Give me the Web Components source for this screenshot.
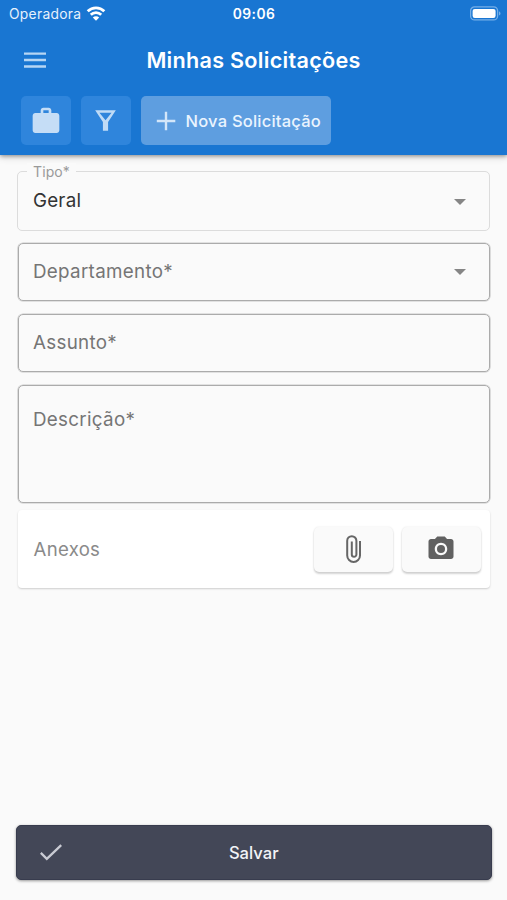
<!DOCTYPE html>
<html lang="pt-BR">
<head>
<meta charset="utf-8">
<title>Minhas Solicitações</title>
<style>
body{margin:0;width:507px;height:900px;overflow:hidden;background:#fafafa;font-family:Inter,"Liberation Sans",sans-serif}
</style>
</head>
<body>
<request-page></request-page>
<script>
function define(name, css, html){
  const t = document.createElement('template');
  t.innerHTML = `<style>*{box-sizing:border-box}svg{display:block;flex:none}${css}</style>${html}`;
  customElements.define(name, class extends HTMLElement{
    constructor(){ super(); this.attachShadow({mode:'open'}).append(t.content.cloneNode(true)); }
  });
}

define('status-bar', `
:host{display:grid;grid-template-columns:1fr auto 1fr;align-items:center;height:27px;padding:0 6px 0 9px;color:#e6f1fc;font-size:13.8px;line-height:27px}
.carrier{display:flex;align-items:center;gap:5px;letter-spacing:.3px}
.carrier span,.time{padding-top:1px;line-height:26px}
.time{font-weight:600;color:#fff;letter-spacing:.45px;margin-right:2px}
.battery{justify-self:end}`,
`<div class="carrier"><span>Operadora</span>
<svg width="20" height="15" viewBox="0 0 19 15" fill="none" stroke="#fff" stroke-width="2.8"><path d="M1.200 5.200a11.800 11.800 0 0 1 16.600 0M4.300 8.700a7.400 7.400 0 0 1 10.400 0"/><path d="M9.500 14.800 6.300 11.600a4.400 4.400 0 0 1 6.400 0z" fill="#fff" stroke="none"/></svg></div>
<span class="time">09:06</span>
<svg class="battery" width="31" height="15" viewBox="0 0 31 15"><rect x=".6" y=".9" width="27" height="13" rx="4" fill="none" stroke="#76afe8" stroke-width="1.300"/><rect x="2.600" y="2.900" width="23" height="9" rx="2.200" fill="#fff"/><path d="M29 5.200c2 .8 2 3.600 0 4.400z" fill="#76afe8"/></svg>`);

define('title-bar', `
:host{display:grid;grid-template-columns:24px 1fr 24px;align-items:center;height:66px;padding:0 24px;color:#fff}
h1{margin:0;font-size:21.6px;font-weight:600;text-align:center;line-height:30px;letter-spacing:.28px;white-space:nowrap}`,
`<svg width="22" height="16" viewBox="0 0 22 16" stroke="#b5d5f4" stroke-width="2.3"><path d="M0 1.600h22M0 8h22M0 14.500h22"/></svg><h1><slot></slot></h1>`);

define('tool-button', `
:host{display:flex;align-items:center;justify-content:center;width:50px;height:49px;border-radius:5px;background:#2f85dc;color:#eaf4fe;font-size:16.5px;font-weight:450;white-space:nowrap}
:host([wide]){width:190px;background:#5e9ee0;gap:10px;justify-content:flex-start;padding-left:15px;letter-spacing:.22px}
slot{display:block}`,
`<slot name="icon"></slot><slot></slot>`);

define('app-header', `
:host{display:block;height:154.5px;flex:none;background:#1976d2;box-shadow:0 1px 4px rgba(0,0,0,.38),0 3px 7px rgba(0,0,0,.12)}
nav{display:flex;gap:10px;padding:3px 20.5px 0}
tool-button svg{display:block}`,
`<status-bar></status-bar><title-bar>Minhas Solicitações</title-bar>
<nav><tool-button><svg slot="icon" width="32" height="32" viewBox="0 0 24 24" fill="#c5ddf6"><path d="M20 6h-4V4c0-1.100-.9-2-2-2h-4c-1.100 0-2 .9-2 2v2H4c-1.100 0-2 .9-2 2v11c0 1.100.9 2 2 2h16c1.100 0 2-.9 2-2V8c0-1.100-.9-2-2-2zm-6 0h-4V4h4v2z"/></svg></tool-button>
<tool-button><svg slot="icon" width="31" height="31" viewBox="0 0 24 24" fill="#c0dbf6"><path d="M7.300 6h9.400L12 11.900 7.300 6zM4 4l6 9.200V20h4v-6.800L20 4z"/></svg></tool-button>
<tool-button wide><svg slot="icon" width="20" height="20" viewBox="0 0 20 20" stroke="#d3e6f9" stroke-width="2.4"><path d="M10 .8v18.500M.8 10h18.500"/></svg>Nova Solicitação</tool-button></nav>`);

define('form-field', `
:host{display:flex;position:relative;align-items:center;justify-content:space-between;height:58px;margin:0 17px 13px 18px;padding:0 21px 0 14px;border:1px solid #ababab;box-shadow:0 0 0 .6px #c8c8c8;border-radius:5px;color:#757575;font-size:18.8px;letter-spacing:.3px;line-height:26px}
:host([filled]){border-color:#dcdcdc;box-shadow:none;height:60px;color:#333;margin:0 17px 12px;padding-left:15px;letter-spacing:.2px}
:host([tall]){height:118px;align-items:flex-start;padding-top:21px}
.label{position:absolute;left:9px;top:-9px;padding:0 6px;background:#fafafa;color:#999;font-size:14px;line-height:18px;letter-spacing:.1px}
.label,.arrow{display:none}
:host([filled]) .label,:host([select]) .arrow{display:block}
:host([filled]) .arrow{margin-top:2px}`,
`<span><slot></slot></span><span class="label"><slot name="label"></slot></span>
<svg class="arrow" width="16" height="8" viewBox="0 0 16 8" fill="#858585"><path d="M2 1h12L8 7z"/></svg>`);

define('file-button', `
:host{display:flex;align-items:center;justify-content:center;width:79px;height:45px;border-radius:5px;background:#fafafa;box-shadow:0 2px 2px rgba(0,0,0,.17),0 0 2px rgba(0,0,0,.1)}`,
`<slot></slot>`);

define('attachments-card', `
:host{display:flex;align-items:center;gap:9px;height:78px;margin:-6px 17px 0 18px;padding:0 9.5px 0 15.5px;background:#fff;border-radius:4px;box-shadow:0 1px 2px rgba(0,0,0,.18);color:#8a8a8a;font-size:18.6px;letter-spacing:.3px}
span{flex:1}`,
`<span>Anexos</span>
<file-button><svg width="17" height="30" viewBox="0 0 17 30" fill="none" stroke="#666" stroke-width="2"><path d="M15 7v14.500a6.400 6.400 0 0 1-12.800 0V6.800a4.600 4.600 0 0 1 9.200 0v13.700a2.300 2.300 0 0 1-4.600 0V7.500"/></svg></file-button>
<file-button><svg width="30" height="30" viewBox="0 0 24 24" fill="#616161"><circle cx="12" cy="12" r="3.200"/><path d="M9 2 7.170 4H4c-1.100 0-2 .9-2 2v12c0 1.100.9 2 2 2h16c1.100 0 2-.9 2-2V6c0-1.100-.9-2-2-2h-3.170L15 2H9zm3 15c-2.760 0-5-2.240-5-5s2.240-5 5-5 5 2.240 5 5-2.240 5-5 5z"/></svg></file-button>`);

define('save-button', `
:host{display:grid;grid-template-columns:24px 1fr 24px;align-items:center;flex:none;height:55px;margin:auto 15px 20px 15.5px;padding:0 23px;border-radius:5px;background:#434757;border:1px solid #383c4e;color:#f2f3f6;font-size:16.6px;font-weight:550;text-align:center;box-shadow:0 1px 3px rgba(0,0,0,.4)}`,
`<svg width="22" height="17" viewBox="0 0 22 17" fill="none" stroke="#c9cbd3" stroke-width="2.300"><path d="m.8 8.900 6 6L21.200 1.200"/></svg><span><slot></slot></span>`);

define('request-page', `
:host{display:flex;flex-direction:column;height:900px}
main{padding-top:16.500px}
form-field,attachments-card{flex:none}`,
`<app-header></app-header>
<main><form-field filled select><span slot="label">Tipo*</span>Geral</form-field>
<form-field select>Departamento*</form-field><form-field>Assunto*</form-field><form-field tall>Descrição*</form-field>
<attachments-card></attachments-card></main>
<save-button>Salvar</save-button>`);
</script>
</body>
</html>
